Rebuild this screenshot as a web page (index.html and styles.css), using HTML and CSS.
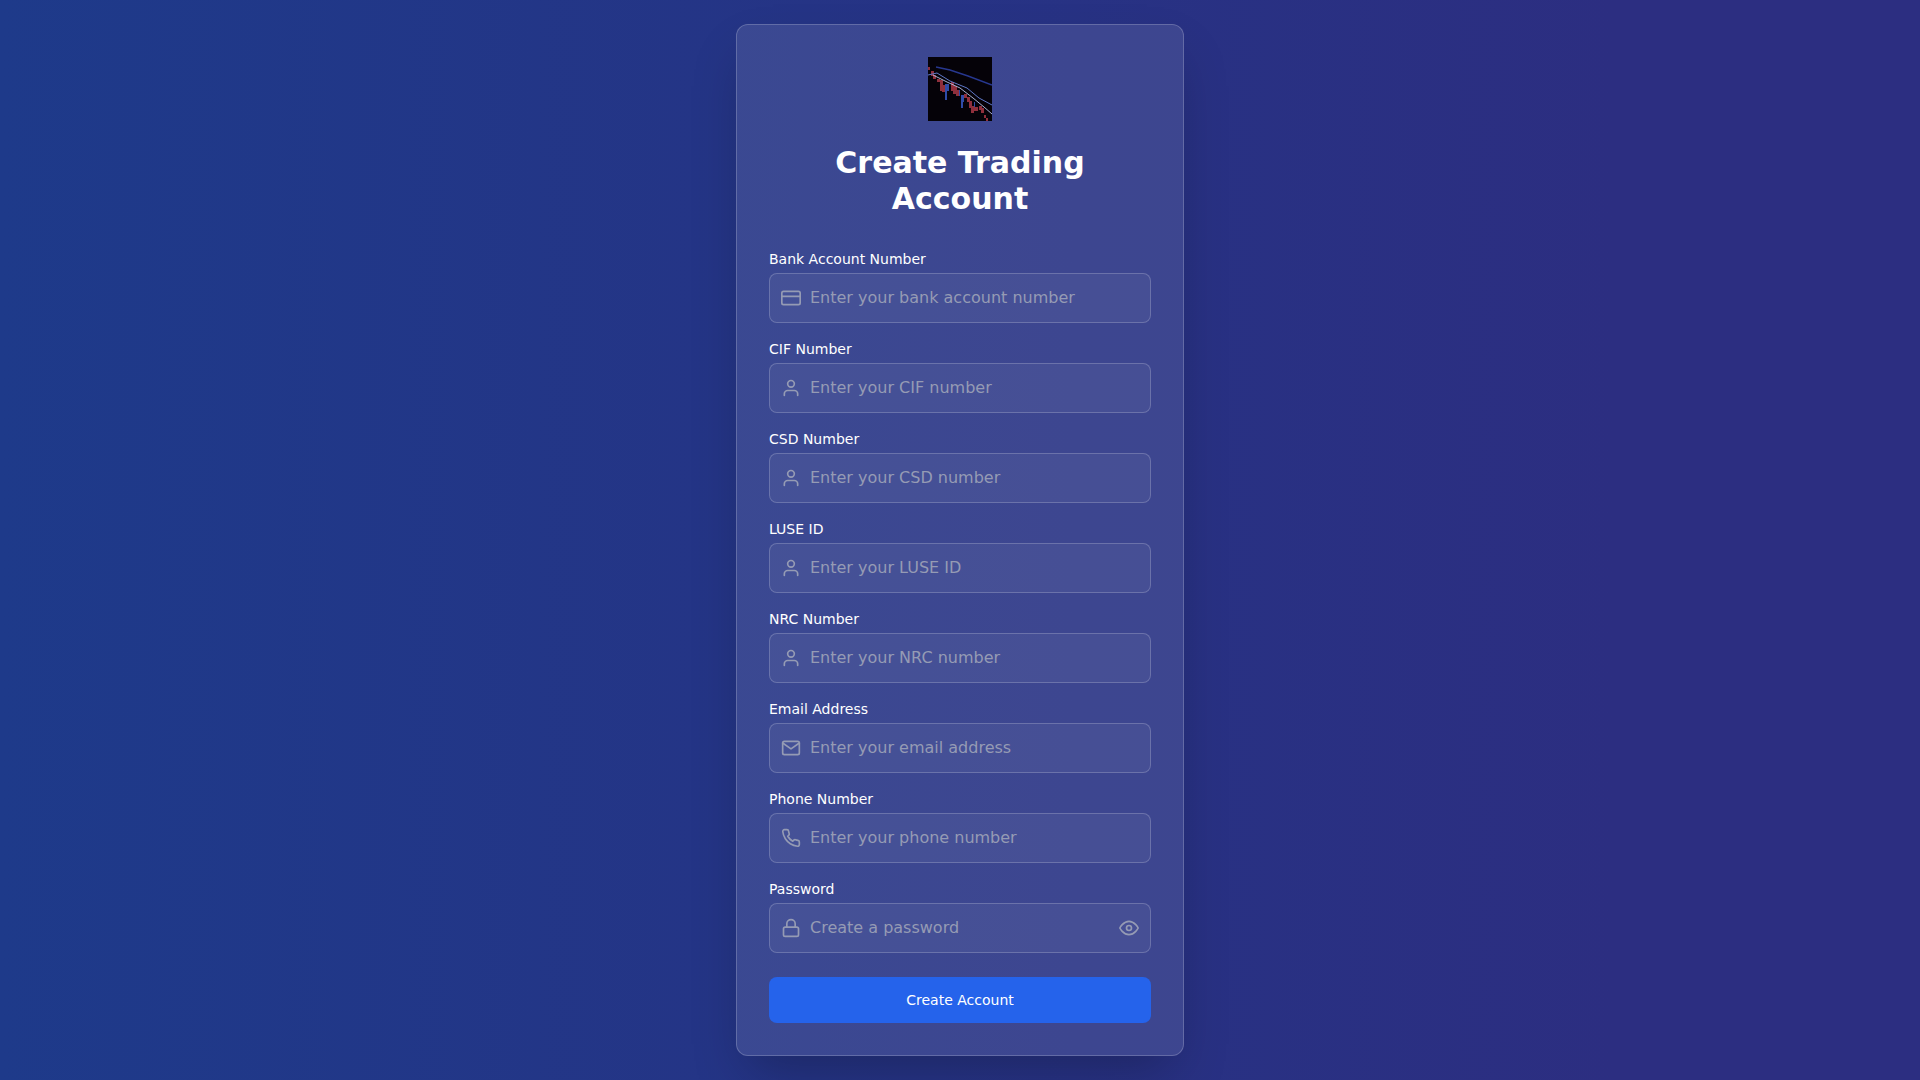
FILE: index.html
```html
<!DOCTYPE html>
<html lang="en">
<head>
<meta charset="utf-8">
<title>Create Trading Account</title>
<link rel="stylesheet" href="styles.css">
</head>
<body>
<main class="card">
  <svg class="logo" viewBox="0 0 64 64" shape-rendering="crispEdges" aria-hidden="true">
    <rect width="64" height="64" fill="#050208"/>
    <g fill="#8f2f3c">
      <rect x="0" y="10" width="2" height="3"/><rect x="3" y="14" width="3" height="5"/>
      <rect x="5" y="18" width="3" height="4"/><rect x="9" y="22" width="3" height="3"/>
      <rect x="12" y="23" width="3" height="11"/><rect x="14" y="28" width="3" height="7"/>
      <rect x="23" y="25" width="3" height="9"/><rect x="25" y="29" width="4" height="8"/>
      <rect x="28" y="33" width="3" height="6"/><rect x="36" y="37" width="3" height="4"/>
      <rect x="39" y="40" width="3" height="5"/><rect x="41" y="44" width="3" height="7"/>
      <rect x="43" y="49" width="3" height="7"/><rect x="46" y="50" width="4" height="4"/>
      <rect x="51" y="49" width="3" height="4"/><rect x="53" y="51" width="3" height="5"/>
      <rect x="56" y="58" width="2" height="3"/><rect x="58" y="61" width="2" height="3"/>
    </g>
    <g fill="#2f4ba8">
      <rect x="17" y="27" width="4" height="7"/><rect x="17" y="34" width="2" height="9"/>
      <rect x="33" y="38" width="2" height="13"/><rect x="35" y="38" width="1" height="7"/>
      <rect x="31" y="33" width="1" height="6"/><rect x="46" y="45" width="1" height="5"/>
    </g>
    <g fill="none" shape-rendering="geometricPrecision">
      <path d="M8 10 L22 13 L40 19 L64 28" stroke="#27378f" stroke-width="1.4"/>
      <path d="M0 18 L9 16 L22 24 L39 31 L51 41 L64 48" stroke="#5e78c8" stroke-width="1"/>
      <path d="M5 18 L19 25 L32 31 L45 41 L56 50 L64 57" stroke="#b8c2e6" stroke-width=".9"/>
    </g>
  </svg>
  <h1 class="title">Create Trading Account</h1>
  <form class="form">
    <div class="field">
      <label class="label" for="bank">Bank Account Number</label>
      <div class="control">
        <svg class="icon icon-left" viewBox="0 0 24 24"><rect x="1" y="4" width="22" height="16" rx="2" ry="2"/><line x1="1" y1="10" x2="23" y2="10"/></svg>
        <input class="input" id="bank" type="text" placeholder="Enter your bank account number">
      </div>
    </div>
    <div class="field">
      <label class="label" for="cif">CIF Number</label>
      <div class="control">
        <svg class="icon icon-left" viewBox="0 0 24 24"><path d="M20 21v-2a4 4 0 0 0-4-4H8a4 4 0 0 0-4 4v2"/><circle cx="12" cy="7" r="4"/></svg>
        <input class="input" id="cif" type="text" placeholder="Enter your CIF number">
      </div>
    </div>
    <div class="field">
      <label class="label" for="csd">CSD Number</label>
      <div class="control">
        <svg class="icon icon-left" viewBox="0 0 24 24"><path d="M20 21v-2a4 4 0 0 0-4-4H8a4 4 0 0 0-4 4v2"/><circle cx="12" cy="7" r="4"/></svg>
        <input class="input" id="csd" type="text" placeholder="Enter your CSD number">
      </div>
    </div>
    <div class="field">
      <label class="label" for="luse">LUSE ID</label>
      <div class="control">
        <svg class="icon icon-left" viewBox="0 0 24 24"><path d="M20 21v-2a4 4 0 0 0-4-4H8a4 4 0 0 0-4 4v2"/><circle cx="12" cy="7" r="4"/></svg>
        <input class="input" id="luse" type="text" placeholder="Enter your LUSE ID">
      </div>
    </div>
    <div class="field">
      <label class="label" for="nrc">NRC Number</label>
      <div class="control">
        <svg class="icon icon-left" viewBox="0 0 24 24"><path d="M20 21v-2a4 4 0 0 0-4-4H8a4 4 0 0 0-4 4v2"/><circle cx="12" cy="7" r="4"/></svg>
        <input class="input" id="nrc" type="text" placeholder="Enter your NRC number">
      </div>
    </div>
    <div class="field">
      <label class="label" for="email">Email Address</label>
      <div class="control">
        <svg class="icon icon-left" viewBox="0 0 24 24"><path d="M4 4h16c1.100 0 2 .9 2 2v12c0 1.100-.9 2-2 2H4c-1.100 0-2-.9-2-2V6c0-1.100.9-2 2-2z"/><polyline points="22,6 12,13 2,6"/></svg>
        <input class="input" id="email" type="email" placeholder="Enter your email address">
      </div>
    </div>
    <div class="field">
      <label class="label" for="phone">Phone Number</label>
      <div class="control">
        <svg class="icon icon-left" viewBox="0 0 24 24"><path d="M22 16.920v3a2 2 0 0 1-2.180 2 19.790 19.790 0 0 1-8.630-3.070 19.500 19.500 0 0 1-6-6 19.790 19.790 0 0 1-3.070-8.670A2 2 0 0 1 4.110 2h3a2 2 0 0 1 2 1.720 12.840 12.840 0 0 0 .7 2.810 2 2 0 0 1-.45 2.110L8.090 9.910a16 16 0 0 0 6 6l1.270-1.270a2 2 0 0 1 2.110-.45 12.840 12.840 0 0 0 2.810.7A2 2 0 0 1 22 16.920z"/></svg>
        <input class="input" id="phone" type="tel" placeholder="Enter your phone number">
      </div>
    </div>
    <div class="field">
      <label class="label" for="password">Password</label>
      <div class="control">
        <svg class="icon icon-left" viewBox="0 0 24 24"><rect x="3" y="11" width="18" height="11" rx="2" ry="2"/><path d="M7 11V7a5 5 0 0 1 10 0v4"/></svg>
        <input class="input" id="password" type="password" placeholder="Create a password">
        <svg class="icon icon-right" viewBox="0 0 24 24"><path d="M1 12s4-8 11-8 11 8 11 8-4 8-11 8-11-8-11-8z"/><circle cx="12" cy="12" r="3"/></svg>
      </div>
    </div>
    <button class="submit" type="button">Create Account</button>
  </form>
</main>
</body>
</html>
```
FILE: styles.css
```css
* { box-sizing: border-box; }
html, body { height: 100%; }
body {
  margin: 0;
  min-height: 100vh;
  display: flex;
  align-items: center;
  justify-content: center;
  background: linear-gradient(to right, #1e3a8a, #2c2e81 84%);
  font-family: "DejaVu Sans", sans-serif;
  color: #fff;
}
.card {
  width: 448px;
  padding: 32px;
  display: flex;
  flex-direction: column;
  border: 1px solid rgba(255, 255, 255, 0.2);
  border-radius: 12px;
  background: rgba(255, 255, 255, 0.1);
  box-shadow: 0 25px 50px -12px rgba(0, 0, 0, 0.25);
}
.logo { display: block; width: 64px; height: 64px; margin: 0 auto 24px; }
.title {
  margin: 0 0 32px;
  font-size: 30px;
  line-height: 36px;
  font-weight: 700;
  text-align: center;
  color: #fff;
}
.form { display: flex; flex-direction: column; gap: 16px; }
.field { display: flex; flex-direction: column; gap: 4px; }
.label { font-size: 14px; line-height: 20px; color: #fff; }
.control { position: relative; }
.input {
  display: block;
  width: 100%;
  height: 50px;
  padding: 11px 40px 13px;
  border: 1px solid rgba(255, 255, 255, 0.2);
  border-radius: 8px;
  background: rgba(255, 255, 255, 0.05);
  font: 16px/24px "DejaVu Sans", sans-serif;
  color: #fff;
  outline: none;
}
.input::placeholder { color: #959bb4; opacity: 1; }
.icon {
  position: absolute;
  top: 15px;
  width: 20px;
  height: 20px;
  fill: none;
  stroke: #959bb4;
  stroke-width: 2;
  stroke-linecap: round;
  stroke-linejoin: round;
}
.icon-left { left: 12px; }
.icon-right { right: 12px; }
.submit {
  height: 46px;
  margin-top: 8px;
  border: 0;
  border-radius: 8px;
  background: #2563eb;
  font: 14px/20px "DejaVu Sans", sans-serif;
  color: #fff;
}
```
